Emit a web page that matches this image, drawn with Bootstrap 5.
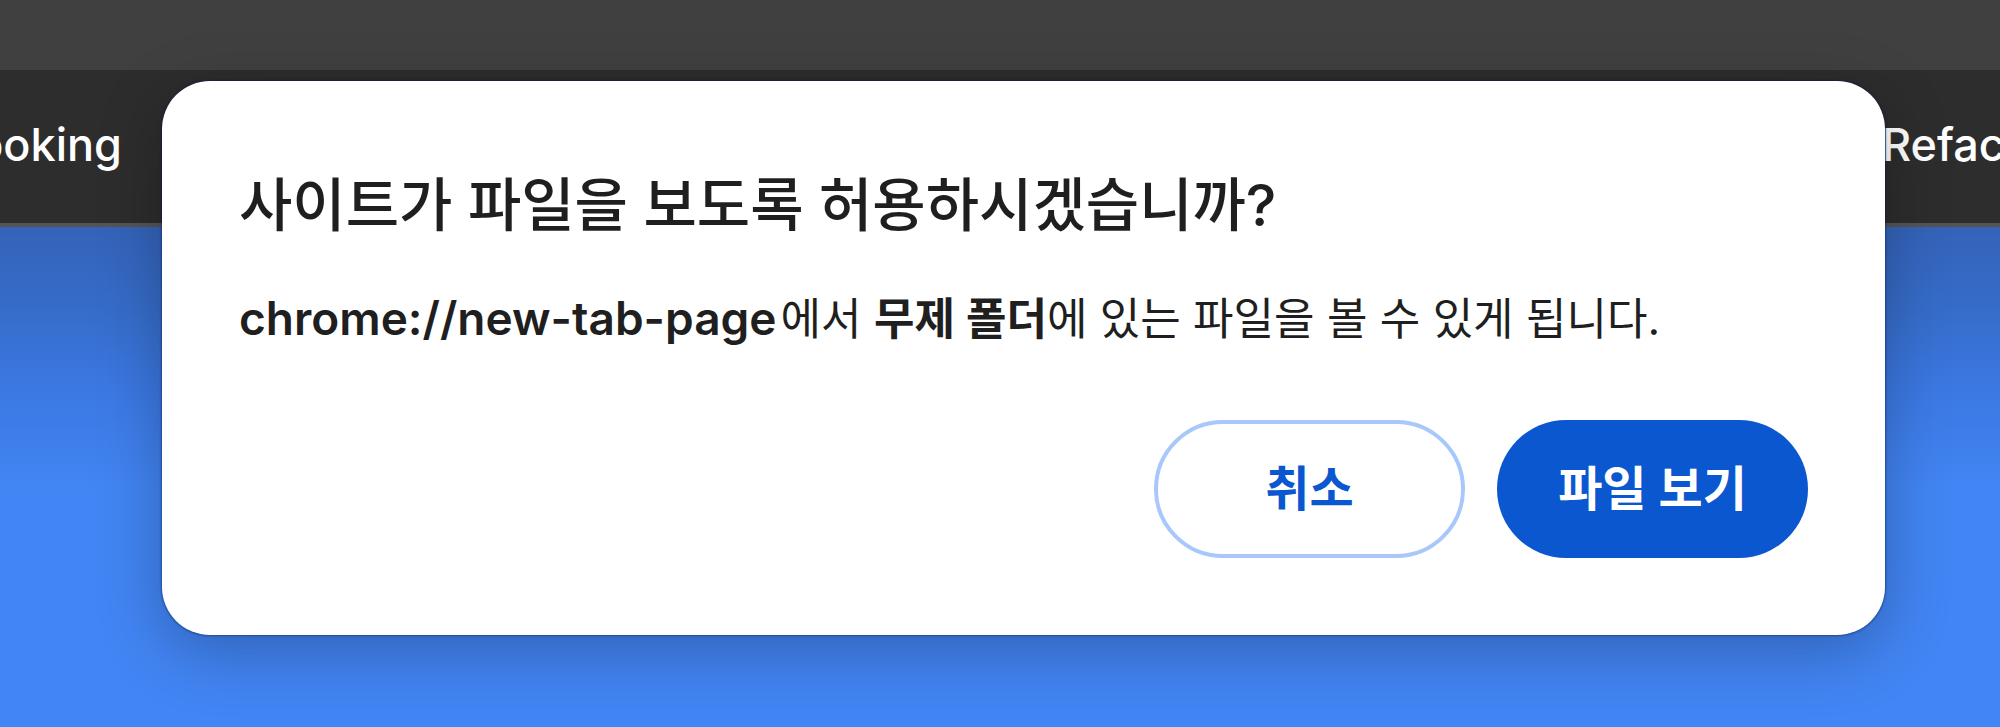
<!DOCTYPE html>
<html lang="ko">
<head>
<meta charset="utf-8">
<meta name="viewport" content="width=device-width, initial-scale=1">
<title>새 탭</title>
<link href="https://cdn.jsdelivr.net/npm/bootstrap@5.3.0/dist/css/bootstrap.min.css" rel="stylesheet">
<style>
body{font-family:Inter,"Noto Sans CJK KR",sans-serif;background:#4285f4;color:#1f1f1f}
.tab-strip{height:70px;background:#404040}
.bookmark-bar{height:157px;padding-bottom:4px;background:#2d2d2d;border-bottom:4px solid #555}
.bookmark-bar a{color:#fff;font-size:45px;line-height:56px;font-weight:500;white-space:nowrap}
.bookmark-start{width:122px}
.bookmark-end{width:118px}
.new-tab{background:linear-gradient(#3463b9 0,#366cc9 80px,#3b78e2 160px,#4285f4 260px)}
.permission{top:81px;left:162px;right:115px;padding:82px 77px 77px 77px;border-radius:48px;background:#fff;box-shadow:0 0 2px 1px rgba(0,20,80,.4),0 16px 64px rgba(0,0,0,.27)}
.permission h1{font-size:58px;line-height:84px;font-weight:500;margin-bottom:40px}
.permission p{font-size:44px;line-height:64px;margin-bottom:69px}
.permission strong{font-weight:600}
.permission .origin{font-size:46px;line-height:1;margin-right:4px}
.actions{gap:32px}
.actions .btn{width:311px;height:138px;border-radius:69px;font-size:48px;font-weight:600;line-height:64px;padding:0}
.btn-cancel,.btn-cancel:hover{color:#0b57d0;background:#fff;border:4px solid #a8c7fa}
.btn-view,.btn-view:hover{color:#fff;background:#0b57d0;border:0}
</style>
</head>
<body class="min-vh-100 d-flex flex-column position-relative overflow-hidden">
<header>
  <div class="tab-strip"></div>
  <nav class="bookmark-bar d-flex justify-content-between align-items-center" aria-label="북마크">
    <a href="#" class="bookmark-start d-flex justify-content-end text-decoration-none">ooking</a>
    <a href="#" class="bookmark-end text-decoration-none">Refac</a>
  </nav>
</header>
<main class="new-tab flex-grow-1"></main>
<section class="permission position-absolute" role="dialog" aria-labelledby="permission-title">
  <h1 id="permission-title">사이트가 파일을 보도록 허용하시겠습니까?</h1>
  <p><strong class="origin">chrome://new-tab-page</strong>에서 <strong>무제 폴더</strong>에 있는 파일을 볼 수 있게 됩니다.</p>
  <div class="actions d-flex justify-content-end">
    <button type="button" class="btn btn-cancel">취소</button>
    <button type="button" class="btn btn-view">파일 보기</button>
  </div>
</section>
<script src="https://cdn.jsdelivr.net/npm/bootstrap@5.3.0/dist/js/bootstrap.bundle.min.js"></script>
</body>
</html>
